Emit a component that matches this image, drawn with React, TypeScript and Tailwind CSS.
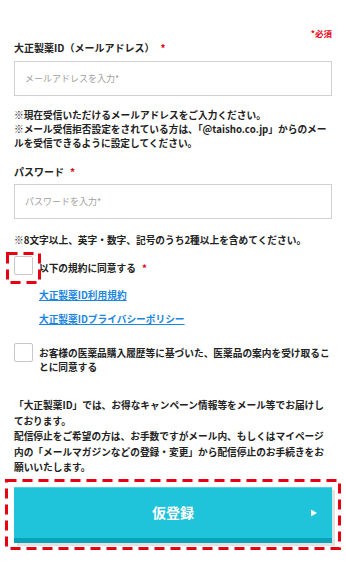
import React from "react";

function Req() {
  return <span className="ml-[6px] text-[#e60012]">*</span>;
}

function Box() {
  return <span className="block w-[19px] h-[19px] shrink-0 rounded-[2px] border border-[#c8c8c8] bg-white" />;
}

// red dashed annotation frame drawn over content
function DashFrame({ w, h, className }: { w: number; h: number; className: string }) {
  return (
    <svg className={`absolute pointer-events-none ${className}`} width={w} height={h}>
      <rect x="1.5" y="1.5" width={w - 3} height={h - 3} fill="none" stroke="#e60012" strokeWidth="3" strokeDasharray="10 6" />
    </svg>
  );
}

export default function App() {
  return (
    <div className="w-[346px] min-h-[574px] bg-white px-[14px] pt-[27px] text-[#222] font-['Noto_Sans_CJK_JP',sans-serif]">
      <p className="text-right text-[8.5px] leading-[12px] font-bold text-[#e60012]">*必須</p>

      <label className="mt-[2px] block text-[10px] leading-[14px] font-bold">
        大正製薬ID（メールアドレス）
        <Req />
      </label>
      <div className="mt-[6px] h-[35px] border border-[#d0d0d0] flex items-center px-[10px] text-[9px] text-[#a0a0a0]">
        メールアドレスを入力*
      </div>

      <p className="mt-[12px] text-[9.7px] leading-[14px] font-semibold">
        ※現在受信いただけるメールアドレスをご入力ください。
        <br />
        ※メール受信拒否設定をされている方は、「@taisho.co.jp」からのメー
        <br />
        ルを受信できるように設定してください。
      </p>

      <label className="mt-[15px] block text-[10px] leading-[14px] font-bold">
        パスワード
        <Req />
      </label>
      <div className="mt-[5px] h-[35px] border border-[#d0d0d0] flex items-center px-[10px] text-[9px] text-[#a0a0a0]">
        パスワードを入力*
      </div>

      <p className="mt-[14px] text-[9.7px] leading-[14px] font-semibold">
        ※8文字以上、英字・数字、記号のうち2種以上を含めてください。
      </p>

      <div className="mt-[9px] flex items-center gap-[6px]">
        <span className="relative">
          <Box />
          <DashFrame w={35} h={32} className="-left-[8px] -top-[4px]" />
        </span>
        <span className="pt-[4px] text-[9.7px] leading-[14px] font-semibold">
          以下の規約に同意する
          <Req />
        </span>
      </div>

      <div className="pl-[25px]">
        <a className="mt-[13px] block text-[9.7px] leading-[14px] font-bold text-[#1b86dd] underline">
          大正製薬ID利用規約
        </a>
        <a className="mt-[10px] block text-[9.7px] leading-[14px] font-bold text-[#1b86dd] underline">
          大正製薬IDプライバシーポリシー
        </a>
      </div>

      <div className="mt-[17px] flex items-start gap-[6px]">
        <Box />
        <p className="pt-[3px] text-[9.7px] leading-[14px] font-semibold">
          お客様の医薬品購入履歴等に基づいた、医薬品の案内を受け取るこ
          <br />
          とに同意する
        </p>
      </div>

      <p className="mt-[24px] text-[9.7px] leading-[15.5px] font-semibold">
        「大正製薬ID」では、お得なキャンペーン情報等をメール等でお届けし
        <br />
        ております。
        <br />
        配信停止をご希望の方は、お手数ですがメール内、もしくはマイページ
        <br />
        内の「メールマガジンなどの登録・変更」から配信停止のお手続きをお
        <br />
        願いいたします。
      </p>

      <div className="relative mt-[11px]">
        <button className="relative w-[318px] h-[56px] flex items-center justify-center bg-[#1fc3da] border-t border-[#4fd3e6] border-b-[5px] border-b-[#0aa2b8] shadow-[3px_3px_0_#e2e2e2] text-white text-[14px] font-bold">
          仮登録
          <svg className="absolute right-[15px] top-1/2 -translate-y-1/2" width="6" height="7" viewBox="0 0 6 7">
            <path d="M0 0 L6 3.5 L0 7 Z" fill="#fff" />
          </svg>
        </button>
        <DashFrame w={336} h={71} className="-left-[9px] -top-[8px]" />
      </div>
    </div>
  );
}
